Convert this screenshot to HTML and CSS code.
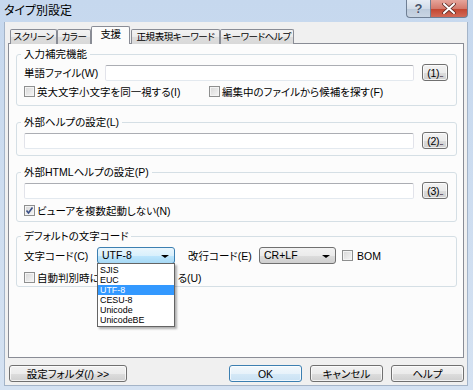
FILE: index.html
```html
<!DOCTYPE html>
<html lang="ja">
<head>
    <meta charset="UTF-8">
    <title>タイプ別設定</title>
    <link rel="stylesheet" href="styles.css">
</head>
<body>
<div class="window">
    <div class="titlebar">
        <span class="title">タイプ別設定</span>
        <div class="caption-buttons">
            <span class="cap-btn help">?</span>
            <span class="cap-btn close">
                <svg width="14" height="11" viewBox="0 0 14 11">
                    <path d="M2 1 L12 10 M12 1 L2 10" stroke="#5a2a24" stroke-width="3.6" stroke-linecap="round"/>
                    <path d="M2 1 L12 10 M12 1 L2 10" stroke="#fff" stroke-width="2" stroke-linecap="round"/>
                </svg>
            </span>
        </div>
    </div>

    <div class="client">
        <div class="tabs">
            <span class="tab t-screen">スクリーン</span>
            <span class="tab t-color">カラー</span>
            <span class="tab t-support selected">支援</span>
            <span class="tab t-regex">正規表現キーワード</span>
            <span class="tab t-keyhelp">キーワードヘルプ</span>
        </div>

        <div class="panel">
            <fieldset class="group">
                <legend>入力補完機能</legend>
                <div class="row">
                    <label class="field-label">単語ファイル(W)</label>
                    <input type="text" class="textbox">
                    <button class="btn browse">(1)<span class="dots">...</span></button>
                </div>
                <div class="row check-row first-checks">
                    <label class="check-item wide"><span class="check"></span>英大文字小文字を同一視する(I)</label>
                    <label class="check-item"><span class="check"></span>編集中のファイルから候補を探す(F)</label>
                </div>
            </fieldset>

            <fieldset class="group">
                <legend>外部ヘルプの設定(L)</legend>
                <div class="row">
                    <input type="text" class="textbox">
                    <button class="btn browse">(2)<span class="dots">...</span></button>
                </div>
            </fieldset>

            <fieldset class="group html-help">
                <legend>外部HTMLヘルプの設定(P)</legend>
                <div class="row">
                    <input type="text" class="textbox">
                    <button class="btn browse">(3)<span class="dots">...</span></button>
                </div>
                <div class="row check-row">
                    <label class="check-item">
                        <span class="check">
                            <svg width="9" height="9" viewBox="0 0 9 9"><path d="M1.5 4.5 L3.5 7 L7.5 1.5" fill="none" stroke="#3b5086" stroke-width="1.6"/></svg>
                        </span>ビューアを複数起動しない(N)
                    </label>
                </div>
            </fieldset>

            <fieldset class="group charset">
                <legend>デフォルトの文字コード</legend>
                <div class="row">
                    <label class="code-label">文字コード(C)</label>
                    <div class="combo-wrap">
                        <div class="combo open">UTF-8<span class="arrow"></span></div>
                        <ul class="dropdown">
                            <li>SJIS</li>
                            <li>EUC</li>
                            <li class="active">UTF-8</li>
                            <li>CESU-8</li>
                            <li>Unicode</li>
                            <li>UnicodeBE</li>
                        </ul>
                    </div>
                    <label class="code-label eol">改行コード(E)</label>
                    <div class="combo eol-combo">CR+LF<span class="arrow"></span></div>
                    <label class="check-item bom"><span class="check"></span>BOM</label>
                </div>
                <div class="row check-row auto-row">
                    <!-- middle of this label sits under the open list -->
                    <label class="check-item"><span class="check"></span><span>自動判別時に</span><span class="covered"></span><span>る(U)</span></label>
                </div>
            </fieldset>
        </div>

        <div class="footer">
            <button class="btn folder">設定フォルダ(/) &gt;&gt;</button>
            <button class="btn default">OK</button>
            <button class="btn">キャンセル</button>
            <button class="btn">ヘルプ</button>
        </div>
    </div>
</div>
</body>
</html>
```

FILE: styles.css
```css
* {
    box-sizing: border-box;
}
html, body {
    margin: 0;
}
body {
    font-family: "Liberation Sans", "Noto Sans CJK JP", sans-serif;
    font-size: 10.5px;
    color: #000;
    font-feature-settings: "palt";
    background: #c9d9ed;
}
.window {
    width: 473px;
    height: 390px;
    display: flex;
    flex-direction: column;
    background: linear-gradient(#c6d8ee, #d5e2f2);
    padding: 0 5px 4px 4px;
}

/* title bar */
.titlebar {
    height: 22px;
    margin: 0 -5px 0 -4px;
    padding-left: 4px;
    display: flex;
    align-items: center;
    justify-content: space-between;
}
.title {
    font-size: 12px;
    line-height: 14px;
}
.caption-buttons {
    align-self: flex-start;
    display: flex;
    margin-right: 5px;
}
.cap-btn {
    height: 18px;
    display: flex;
    align-items: center;
    justify-content: center;
    border: 1px solid #6f7f94;
    border-top: none;
}
.help {
    width: 24px;
    border-radius: 0 0 0 4px;
    border-right: none;
    background: linear-gradient(#e6edf5, #d2dce8 50%, #bccadb 51%, #c9d5e3);
    color: #44526a;
    font-size: 13px;
    font-weight: bold;
    text-shadow: 0 0 1px #fff;
}
.close {
    width: 38px;
    border-radius: 0 0 4px 0;
    background: linear-gradient(#e6a59b, #d47a6c 50%, #c2442f 51%, #d26a57);
}

/* client area */
.client {
    flex: 1;
    display: flex;
    flex-direction: column;
    background: #f0f0f0;
    border: 1px solid #a4b4c8;
    border-top: none;
}
.tabs {
    display: flex;
    align-items: flex-end;
    padding: 4px 0 0 5px;
    height: 22px;
    position: relative;
    z-index: 1;
}
.tab {
    height: 15px;
    line-height: 13px;
    font-size: 9.5px;
    text-align: center;
    white-space: nowrap;
    letter-spacing: -0.4px;
    border: 1px solid #898c95;
    border-bottom: none;
    border-radius: 2px 2px 0 0;
    background: linear-gradient(#f3f3f3, #ebebeb 50%, #dddddd 51%, #d9d9d9);
}
.t-screen { width: 47px; }
.t-color { width: 34px; }
.t-support { width: 39px; }
.t-regex { width: 89px; margin-left: 1px; }
.t-keyhelp { width: 74px; }
.tab.selected {
    height: 18px;
    line-height: 15px;
    font-size: 10.5px;
    background: #fcfcfc;
    position: relative;
    z-index: 2;
}
.panel {
    flex: 1;
    margin: -1px 3px 0 3px;
    padding: 4px 6px 0 7px;
    border: 1px solid #898c95;
    background: #fcfcfc;
}

/* group boxes */
.group {
    margin: 10px 0 0;
    padding: 0 8px 6px 7px;
    border: 1px solid #d5dfe5;
    border-radius: 3px;
    min-width: 0;
}
.group:first-child {
    margin-top: 0;
}
.group legend {
    padding: 0 3px;
    margin-left: -3px;
    line-height: 12px;
    height: 12px;
}
.row {
    display: flex;
    align-items: center;
    height: 17px;
    margin-top: 4px;
}
.check-row {
    height: 14px;
    margin-top: 3px;
}
.first-checks {
    margin-bottom: 1px;
}
.html-help {
    padding-bottom: 4px;
}
.html-help .check-row {
    margin-top: 4px;
}
.charset {
    margin-top: 8px;
    padding-bottom: 2px;
}
.charset .row:first-of-type {
    margin-top: 5px;
}
.auto-row.check-row {
    margin-top: 6px;
}
.field-label {
    width: 81px;
    flex: none;
}
.textbox {
    flex: 1;
    min-width: 0;
    height: 16px;
    margin: 0 8px 0 0;
    padding: 0 2px;
    border: 1px solid #e2e3ea;
    border-top-color: #abadb3;
    border-bottom-color: #e3e9ef;
    border-radius: 2px;
    background: #fff;
    font: inherit;
}

/* buttons */
.btn {
    height: 17px;
    padding: 0;
    border: 1px solid #707070;
    border-radius: 3px;
    background: linear-gradient(#f2f2f2, #ebebeb 50%, #dddddd 51%, #cfcfcf);
    font: inherit;
    color: #000;
    box-shadow: inset 0 0 0 1px rgba(255, 255, 255, 0.7);
}
.browse {
    width: 26px;
    flex: none;
    letter-spacing: -0.3px;
}
.dots {
    letter-spacing: -1px;
    font-size: 8px;
}

/* checkboxes */
.check-item {
    display: flex;
    align-items: center;
    white-space: nowrap;
}
.check-item.wide {
    width: 185px;
}
.check {
    width: 11px;
    height: 11px;
    margin-right: 2px;
    flex: none;
    border: 1px solid #8e8f8f;
    background: linear-gradient(135deg, #d7d7d7, #f6f6f6);
    box-shadow: inset 0 0 0 1px #f4f4f4;
    display: flex;
    align-items: center;
    justify-content: center;
}
.covered {
    width: 78px;
    flex: none;
}

/* combo boxes */
.code-label {
    width: 73px;
    flex: none;
}
.code-label.eol {
    width: 71px;
    margin-left: 13px;
}
.combo-wrap {
    position: relative;
    width: 78px;
    flex: none;
}
.combo {
    position: relative;
    height: 17px;
    line-height: 15px;
    padding-left: 4px;
    border: 1px solid #707070;
    border-radius: 3px;
    background: linear-gradient(#f2f2f2, #ebebeb 50%, #dddddd 51%, #cfcfcf);
}
.combo.open {
    border-color: #3c7fb1;
    background: linear-gradient(#eaf6fd, #d9f0fc 50%, #bee6fd 51%, #a7d9f5);
}
.eol-combo {
    width: 77px;
    flex: none;
}
.arrow {
    position: absolute;
    right: 5px;
    top: 7px;
    border: 3px solid transparent;
    border-top: 3px solid #000;
    border-left-width: 4px;
    border-right-width: 4px;
}
.check-item.bom {
    margin-left: 6px;
}
.check-item.bom .check {
    margin-right: 4px;
}

/* open list */
.dropdown {
    position: absolute;
    top: 16px;
    left: 0;
    width: 78px;
    margin: 0;
    padding: 1px 0;
    list-style: none;
    background: #fff;
    border: 1px solid #646464;
    box-shadow: 2px 2px 2px rgba(0, 0, 0, 0.3);
    z-index: 5;
}
.dropdown li {
    height: 10px;
    line-height: 10px;
    padding-left: 2px;
    font-size: 8.9px;
}
.dropdown li.active {
    background: #3399ff;
    color: #fff;
}

/* bottom buttons */
.footer {
    display: flex;
    gap: 8px;
    padding: 7px 3px 3px 4px;
}
.footer .btn {
    width: 73px;
}
.footer .folder {
    width: 118px;
    margin-right: auto;
}
.footer .default {
    border-color: #3c7fb1;
    background: linear-gradient(#f2f8fc, #e7f2fa 50%, #d5e9f7 51%, #c9e1f3);
}
```
